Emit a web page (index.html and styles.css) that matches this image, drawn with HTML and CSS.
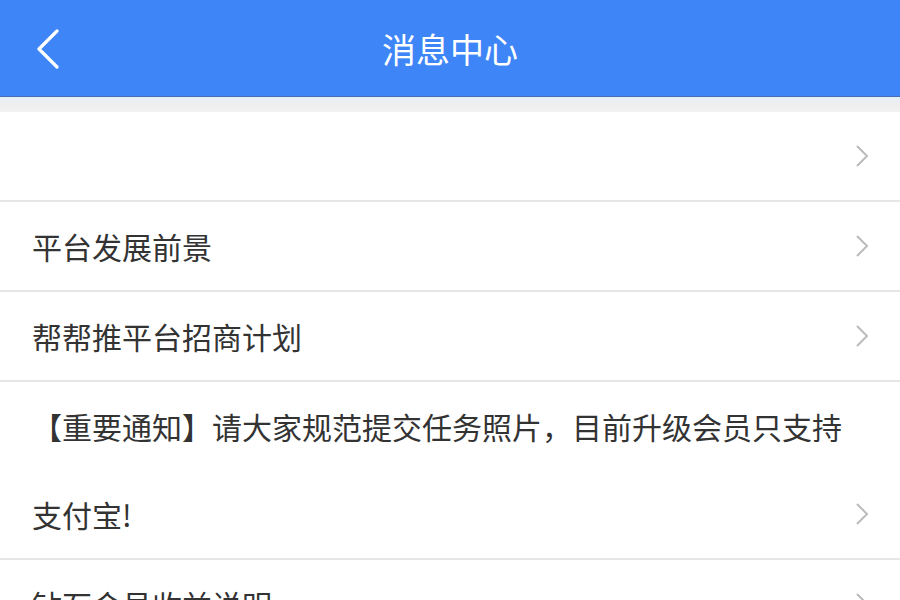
FILE: index.html
```html
<!DOCTYPE html>
<html lang="zh-CN">
<head>
    <meta charset="UTF-8">
    <meta name="viewport" content="width=device-width, initial-scale=1.0">
    <title>消息中心</title>
    <link rel="stylesheet" href="styles.css">
</head>
<body>
    <div class="topBar">
        <a class="back" href="#">
            <svg width="26" height="40" viewBox="0 0 26 40"><path d="M22 2 L4 20 L22 38" fill="none" stroke="#fff" stroke-width="3.2" stroke-linecap="round" stroke-linejoin="round"/></svg>
        </a>
        <h1>消息中心</h1>
    </div>
    <div class="gap"></div>
    <ul class="msgList">
        <li class="msg">
            <span class="title"></span>
            <span class="arrow"><svg width="14" height="24" viewBox="0 0 14 24"><path d="M2 2 L12 12 L2 22" fill="none" stroke="#bbb" stroke-width="2"/></svg></span>
        </li>
        <li class="msg">
            <span class="title">平台发展前景</span>
            <span class="arrow"><svg width="14" height="24" viewBox="0 0 14 24"><path d="M2 2 L12 12 L2 22" fill="none" stroke="#bbb" stroke-width="2"/></svg></span>
        </li>
        <li class="msg">
            <span class="title">帮帮推平台招商计划</span>
            <span class="arrow"><svg width="14" height="24" viewBox="0 0 14 24"><path d="M2 2 L12 12 L2 22" fill="none" stroke="#bbb" stroke-width="2"/></svg></span>
        </li>
        <li class="msg">
            <span class="title">【重要通知】请大家规范提交任务照片，目前升级会员只支持支付宝!</span>
            <span class="arrow"><svg width="14" height="24" viewBox="0 0 14 24"><path d="M2 2 L12 12 L2 22" fill="none" stroke="#bbb" stroke-width="2"/></svg></span>
        </li>
        <li class="msg">
            <span class="title">钻石会员收益说明</span>
            <span class="arrow"><svg width="14" height="24" viewBox="0 0 14 24"><path d="M2 2 L12 12 L2 22" fill="none" stroke="#bbb" stroke-width="2"/></svg></span>
        </li>
    </ul>
</body>
</html>
```

FILE: styles.css
```css
html{
    height: 100%;
}
body{
    margin: 0;
    padding: 0;
    background: #fff;
    font-family: "Noto Sans CJK SC", "Noto Sans", sans-serif;
    color: #333;
}

/* header */
.topBar{
    height: 96px;
    background: #3e86f7;
    border-bottom: 1px solid #4a6cb0;
    display: flex;
    align-items: center;
    justify-content: center;
    position: relative;
}
.topBar h1{
    margin: 0;
    font-size: 34px;
    font-weight: normal;
    color: #fff;
    letter-spacing: 0;
}
.back{
    position: absolute;
    left: 35px;
    top: 29px;
    display: block;
    line-height: 0;
}

.gap{
    height: 15px;
    background: linear-gradient(#e4f0fb, #eeeeee 40%, #f2f2f2);
}

/* list */
.msgList{
    list-style: none;
    margin: 0;
    padding: 0;
}
.msg{
    display: flex;
    align-items: flex-end;
    padding: 0 32px;
    border-bottom: 2px solid #e6e6e6;
    min-height: 88px;
}
.msg .title{
    flex: 1;
    font-size: 30px;
    line-height: 88px;
    padding-right: 6px;
}
.msg .arrow{
    height: 88px;
    display: flex;
    align-items: center;
    line-height: 0;
    margin-right: -1px;
}
```
